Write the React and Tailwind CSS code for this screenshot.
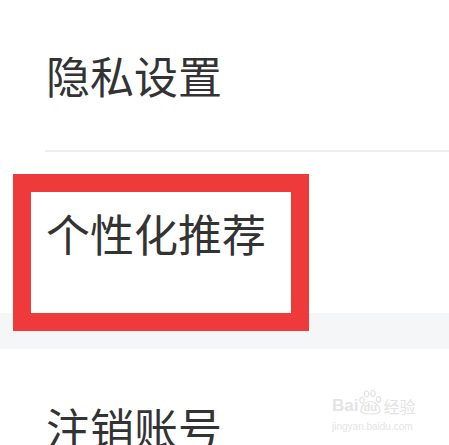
import React from 'react';

const cjk = { fontFamily: '"Noto Sans CJK SC", "Noto Sans", sans-serif' };
const latin = { fontFamily: '"Liberation Sans", Arial, sans-serif' };

export default function App() {
  return (
    <div className="relative w-[449px] h-[445px] overflow-hidden bg-white text-[#333333]" style={cjk}>
      {/* 隐私设置 */}
      <div className="h-[150px] flex items-center pl-[46px] text-[44px] leading-none">
        隐私设置
      </div>
      <div className="ml-[45px] h-[2px] bg-[#eeeeee]" />

      {/* 个性化推荐 */}
      <div className="h-[161px] flex items-center pl-[46px] text-[44px] leading-none">
        个性化推荐
      </div>

      {/* section gap */}
      <div className="h-[36px] bg-[#f5f6f8]" />

      {/* 注销账号 */}
      <div className="pt-[56px] pl-[46px] text-[44px] leading-none whitespace-nowrap">
        注销账号
      </div>

      {/* annotation box */}
      <div className="absolute left-[13px] top-[174px] w-[296px] h-[157px] border-[18px] border-[#ee3a3a]" />

      {/* watermark */}
      <div className="absolute left-[332px] top-[390px] w-max flex flex-col items-start text-[#e4e4e4] select-none whitespace-nowrap">
        <div className="flex items-end leading-none h-[25px]">
          <span className="text-[17px] font-bold leading-none mb-[1px]" style={latin}>Bai</span>
          <span className="relative w-[23px] h-[25px] ml-[1px]">
            <svg width="23" height="25" viewBox="0 0 23 25" fill="none" stroke="#e2e2e2" strokeWidth="1.2">
              <ellipse cx="7.5" cy="4" rx="2.3" ry="3" />
              <ellipse cx="14" cy="3.5" rx="2.3" ry="3" />
              <ellipse cx="3" cy="10" rx="2.2" ry="2.8" />
              <ellipse cx="19.5" cy="9.5" rx="2.2" ry="2.8" />
              <path d="M2 21 C2 15 7 11.5 11 11.5 C15 11.5 21 15 21 21 C21 25 2 25 2 21 Z" />
            </svg>
            <span className="absolute left-[4px] bottom-[2px] text-[11px] font-bold leading-none" style={latin}>du</span>
          </span>
          <span className="text-[16px] leading-none ml-[1px] mb-[1px]" style={cjk}>经验</span>
        </div>
        <span className="text-[10px] leading-none mt-[7px]" style={latin}>jingyan.baidu.com</span>
      </div>
    </div>
  );
}
